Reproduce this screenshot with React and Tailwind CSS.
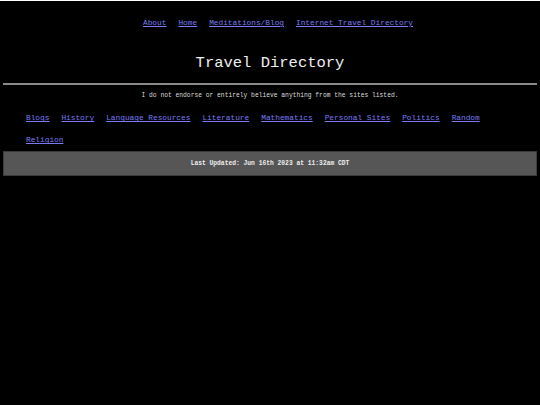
const navLinks = ['About', 'Home', 'Meditations/Blog', 'Internet Travel Directory']

const categories = [
  'Blogs',
  'History',
  'Language Resources',
  'Literature',
  'Mathematics',
  'Personal Sites',
  'Politics',
  'Random',
  'Religion'
]

const App = () => {
  return (
    <div
      className="min-h-screen w-full bg-black text-[#e6e6e6]"
      style={{ fontFamily: '"Liberation Mono", "DejaVu Sans Mono", monospace' }}
    >
      {/* Top nav */}
      <div className="mt-[1px] h-[44px] pl-[16px] flex items-center justify-center gap-x-[12px] text-[7.8px] leading-[12px]">
        {navLinks.map((link) => (
          <a key={link} href="#" className="text-[#7a7af5] underline">
            {link}
          </a>
        ))}
      </div>

      {/* Title */}
      <div className="h-[35px] flex items-center justify-center text-[15.5px] leading-[20px] text-[#eeeeee]">
        Travel Directory
      </div>

      <div className="mx-[3px] mt-[3px] h-[2px] bg-[#8a8a8a]"></div>

      <div className="mt-[2px] h-[18px] flex items-center justify-center text-[6.3px] leading-[10px] text-[#dddddd]">
        I do not endorse or entirely believe anything from the sites listed.
      </div>

      {/* Categories */}
      <div className="pt-[3px] px-[26px] flex flex-wrap gap-x-[12px] text-[7.8px]">
        {categories.map((cat) => (
          <a key={cat} href="#" className="h-[22px] flex items-center text-[#7a7af5] underline">
            {cat}
          </a>
        ))}
      </div>

      {/* Footer */}
      <div className="mx-[3px] -mt-[1px] h-[25px] flex items-center justify-center bg-[#565656] border border-[#3a3a3a] text-[6.3px] font-bold text-[#eeeeee]">
        Last Updated: Jun 16th 2023 at 11:32am CDT
      </div>
    </div>
  )
}

export default App
